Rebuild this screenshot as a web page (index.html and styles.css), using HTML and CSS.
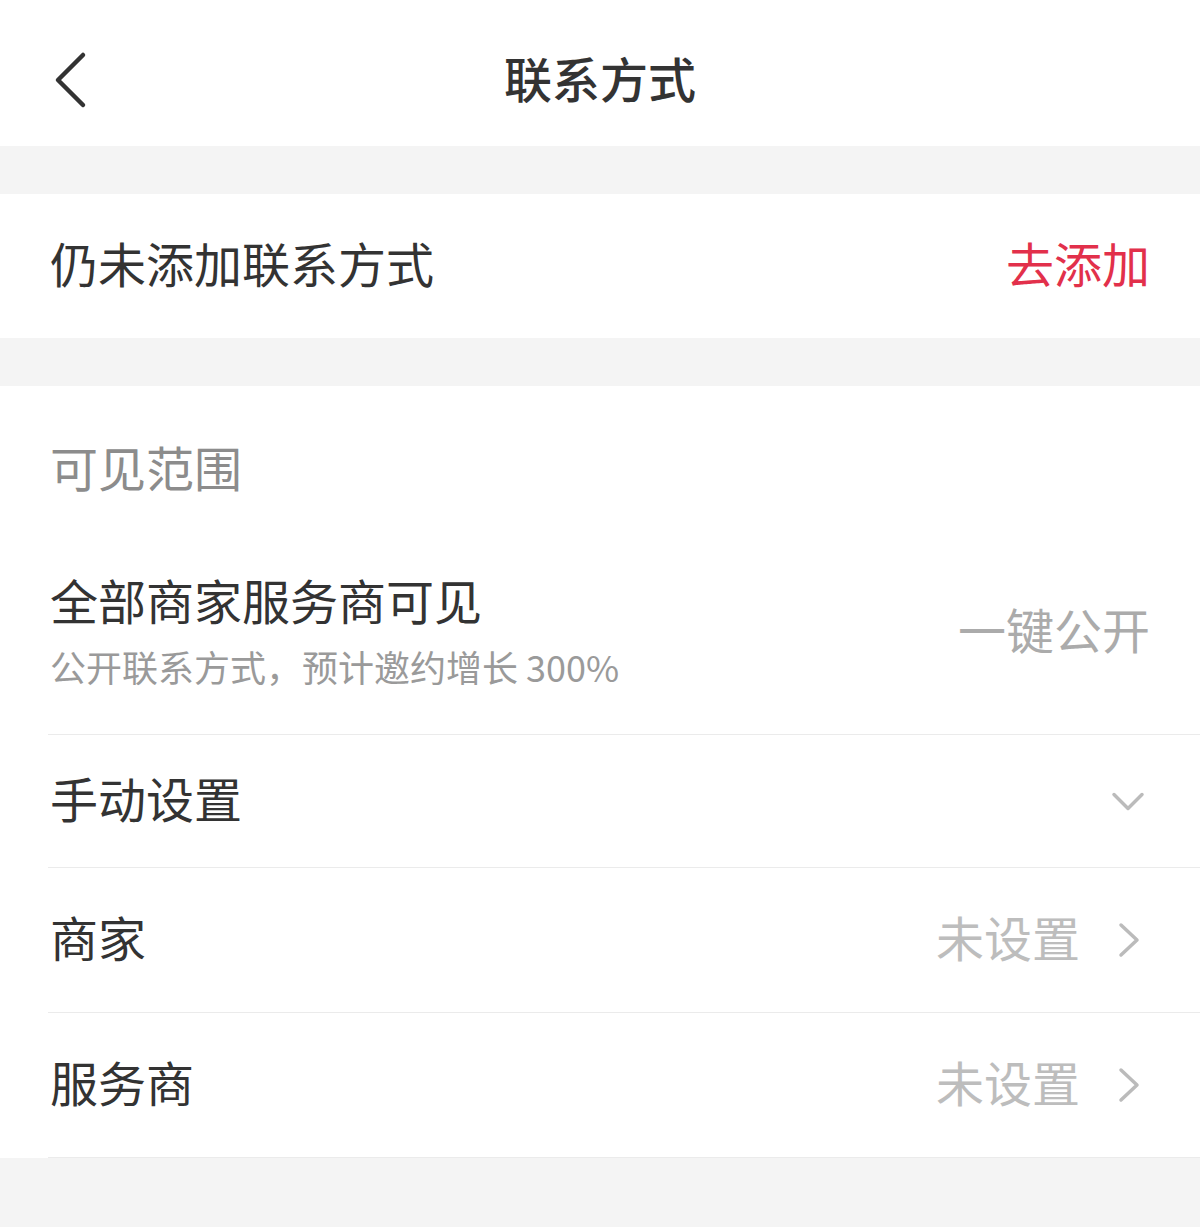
FILE: index.html
```html
<!DOCTYPE html>
<html lang="zh-CN">
<head>
<meta charset="utf-8">
<title>联系方式</title>
<link rel="stylesheet" href="styles.css">
</head>
<body>
<header class="nav">
  <div class="nav-left">
    <svg class="back" width="40" height="60" viewBox="0 0 40 60"><path d="M33 5 L8 30 L33 55" fill="none" stroke="#333" stroke-width="4.5" stroke-linecap="round" stroke-linejoin="round"/></svg>
  </div>
  <div class="nav-title">联系方式</div>
  <div class="nav-right"></div>
</header>

<section class="card add-row">
  <div class="main-text">仍未添加联系方式</div>
  <div class="add-link">去添加</div>
</section>

<section class="card scope">
  <div class="scope-title">可见范围</div>
  <div class="row row-public">
    <div class="row-texts">
      <div class="main-text">全部商家服务商可见</div>
      <div class="sub-text">公开联系方式，预计邀约增长 300%</div>
    </div>
    <div class="public-btn">一键公开</div>
  </div>
  <div class="row row-manual">
    <div class="main-text">手动设置</div>
    <svg class="arrow" width="40" height="40" viewBox="0 0 40 40"><path d="M4 17.5 L18 31.5 L32 17.5" fill="none" stroke="#bbb" stroke-width="3.5" stroke-linecap="round" stroke-linejoin="round"/></svg>
  </div>
  <div class="row row-item">
    <div class="main-text">商家</div>
    <div class="row-right">
      <span class="value">未设置</span>
      <svg class="arrow" width="40" height="56" viewBox="0 0 40 56"><path d="M11 17 L27 32 L11 47" fill="none" stroke="#bbb" stroke-width="3.5" stroke-linecap="round" stroke-linejoin="round"/></svg>
    </div>
  </div>
  <div class="row row-item">
    <div class="main-text">服务商</div>
    <div class="row-right">
      <span class="value">未设置</span>
      <svg class="arrow" width="40" height="56" viewBox="0 0 40 56"><path d="M11 17 L27 32 L11 47" fill="none" stroke="#bbb" stroke-width="3.5" stroke-linecap="round" stroke-linejoin="round"/></svg>
    </div>
  </div>
</section>
</body>
</html>
```

FILE: styles.css
```css
html, body {
  margin: 0;
  padding: 0;
}
body {
  background: #f4f4f4;
  font-family: "Noto Sans CJK SC", "Noto Sans", sans-serif;
  color: #333;
  min-height: 1227px;
}
.nav {
  background: #fff;
  height: 146px;
  box-sizing: border-box;
  padding-top: 14px;
  display: grid;
  grid-template-columns: 1fr auto 1fr;
  align-items: center;
}
.nav-left {
  padding-left: 50px;
  display: flex;
  align-items: center;
}
.back {
  display: block;
}
.nav-title {
  font-size: 48px;
  line-height: 56px;
  font-weight: 500;
  color: #333;
  padding-bottom: 6px;
}
.card {
  background: #fff;
  margin-top: 48px;
}
.add-row {
  height: 144px;
  box-sizing: border-box;
  padding: 0 50px 8px 50px;
  display: flex;
  justify-content: space-between;
  align-items: center;
}
.main-text {
  font-size: 48px;
  line-height: 56px;
  color: #333;
}
.add-link {
  font-size: 48px;
  line-height: 56px;
  color: #e2304b;
}
.scope-title {
  height: 168px;
  box-sizing: border-box;
  padding: 0 0 8px 50px;
  display: flex;
  align-items: center;
  font-size: 48px;
  color: #8c8c8c;
}
.row {
  margin-left: 48px;
  padding: 0 50px 0 2px;
  border-bottom: 1px solid #ebebeb;
  display: flex;
  justify-content: space-between;
  align-items: center;
  box-sizing: border-box;
}
.row-public {
  padding-top: 17px;
  padding-bottom: 46px;
}
.row-texts {
  display: flex;
  flex-direction: column;
  gap: 17px;
}
.sub-text {
  font-size: 36px;
  line-height: 44px;
  color: #9a9a9a;
}
.public-btn {
  font-size: 48px;
  line-height: 56px;
  color: #ababab;
  padding-bottom: 4px;
}
.row-manual {
  height: 133px;
  padding-bottom: 8px;
}
.row-item {
  height: 145px;
  padding-bottom: 8px;
}
.row-right {
  display: flex;
  align-items: center;
  gap: 30px;
}
.value {
  font-size: 48px;
  line-height: 56px;
  color: #bdbdbd;
}
.arrow {
  display: block;
  flex: none;
}
```
